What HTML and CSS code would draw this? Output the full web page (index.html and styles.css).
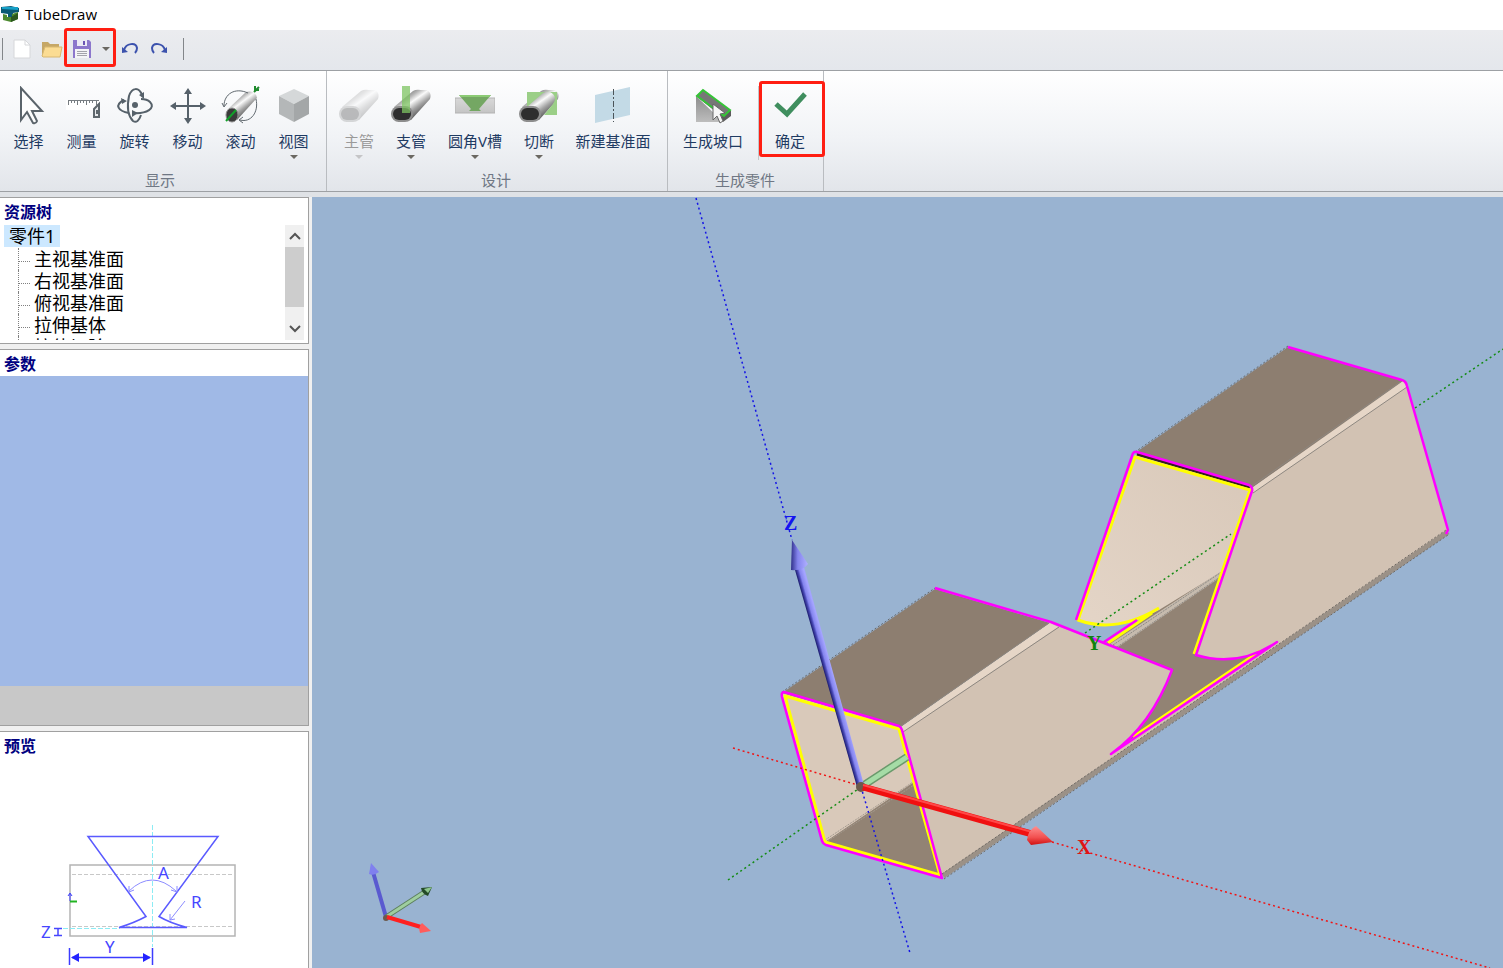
FILE: index.html
```html
<!doctype html>
<html lang="zh-CN">
<head>
	<meta charset="utf-8" />
	<title>TubeDraw</title>
	<link rel="stylesheet" href="styles.css">
</head>
<body>
	<!-- shared gradients and symbols -->
	<svg class="defs" width="0" height="0">
		<defs>
			<linearGradient id="metal" x1="0.1" y1="0" x2="0.9" y2="1">
				<stop offset="0.15" stop-color="#777" /><stop offset="0.3" stop-color="#b5b5b5" /><stop offset="0.42" stop-color="#fafafa" />
				<stop offset="0.58" stop-color="#a2a2a2" /><stop offset="0.75" stop-color="#5c5c5c" />
			</linearGradient>
			<linearGradient id="plate" x1="0" y1="0" x2="0" y2="1">
				<stop offset="0" stop-color="#d8d8d8" /><stop offset="1" stop-color="#c4c4c4" />
			</linearGradient>
			<linearGradient id="block" x1="0" y1="0" x2="0" y2="1">
				<stop offset="0" stop-color="#8c8c8c" /><stop offset="1" stop-color="#bdbdbd" />
			</linearGradient>
			<symbol id="tube" viewBox="0 0 40 40">
				<path d="M3 21 L22 5 Q25 3 30 4 L36 4 Q41 7 39 13 L20 34 L7 36Z" fill="url(#metal)" />
				<rect x="0" y="20" width="22" height="16" rx="8" fill="#8d8d8d" />
				<rect x="2" y="22" width="18" height="12" rx="6" fill="#2e2e2e" />
			</symbol>
		</defs>
	</svg>

	<header class="titlebar">
		<svg width="18" height="16" viewBox="0 0 18 16">
			<path d="M0 1 L10 0 L18 2 V6 L12 7 V11 H7 V8 L0 7Z" fill="#0b5a75" />
			<path d="M1 1 L17 1 V4 L1 3Z" fill="#16a0c8" />
			<path d="M2 8 L6 9 V11 H11 V8 L17 6 V13 L10 16 L2 14Z" fill="#4d8a30" />
			<path d="M10 11 L17 7 V13 L10 16Z" fill="#2b571d" />
		</svg>
		<h1>TubeDraw</h1>
	</header>

	<div class="quickbar">
		<span class="bar"></span>
		<button class="q-new" aria-label="新建">
			<svg width="18" height="20" viewBox="0 0 18 20"><path d="M1 1 H12 L17 6 V19 H1Z" fill="#fff" stroke="#d6d7da" /><path d="M12 1 V6 H17" fill="none" stroke="#d6d7da" /></svg>
		</button>
		<button class="q-open" aria-label="打开">
			<svg width="22" height="18" viewBox="0 0 22 18"><path d="M1 16 V2 H7 L9 4 H18 V8" fill="#c6a766" /><path d="M1 16 L4 7 H21 L19 17 H2Z" fill="#fbdc93" stroke="#d9b871" /></svg>
		</button>
		<span class="q-save marked">
			<button aria-label="保存">
				<svg width="20" height="20" viewBox="0 0 20 20"><path d="M1 1 H17 L19 3 V19 H1Z" fill="#8c77cc" /><path d="M5 1 H15 V7 H5Z" fill="#eceaf5" /><path d="M11 2 H13 V6 H11Z" fill="#6c55b5" /><path d="M3 10 H17 V19 H3Z" fill="#f4f4f6" /><path d="M5 12.500 H15 M5 14.500 H15 M5 16.500 H15" stroke="#a3a3ab" /></svg>
			</button>
			<button class="q-drop" aria-label="保存选项"><i class="caret"></i></button>
		</span>
		<button class="q-undo" aria-label="撤销">
			<svg width="18" height="14" viewBox="0 0 18 14"><path d="M3 8 C5 1 15 0 16 6 Q16 9 14 11" fill="none" stroke="#3c52ad" stroke-width="2" /><path d="M1 5 L1 11 L7 10Z" fill="#3c52ad" /></svg>
		</button>
		<button class="q-redo" aria-label="重做">
			<svg width="18" height="14" viewBox="0 0 18 14"><path d="M15 8 C13 1 3 0 2 6 Q2 9 4 11" fill="none" stroke="#3c52ad" stroke-width="2" /><path d="M17 5 L17 11 L11 10Z" fill="#3c52ad" /></svg>
		</button>
		<span class="bar"></span>
	</div>

	<nav class="ribbon">
		<section class="group g-view">
			<div class="tools">
				<button class="tool">
					<svg width="40" height="40" viewBox="0 0 40 40"><path d="M12 2 V34 L18 26 L24 37 Q27 38 28 35 L23 25 H33Z" fill="#fdfdfd" stroke="#5b646b" stroke-width="2" /></svg>
					<span>选择</span>
				</button>
				<button class="tool">
					<svg width="40" height="40" viewBox="0 0 40 40"><rect x="4" y="14" width="34" height="10" fill="#fff" /><path d="M6 14.500 H37 M6.500 14 V19 M9.500 14 V17 M12.500 14 V17 M15.500 14 V19 M18.500 14 V17 M21.500 14 V17 M24.500 14 V19 M27.500 14 V17 M30.500 14 V17 M34.500 14 V19" stroke="#777d82" fill="none" /><path d="M32 31 V23 L37 18 V31Z" fill="#e8eaec" stroke="#5f676d" stroke-width="2" /><path d="M35 24 V28" stroke="#5f676d" stroke-width="2" /></svg>
					<span>测量</span>
				</button>
				<button class="tool">
					<svg width="40" height="40" viewBox="0 0 40 40"><g fill="none" stroke="#56616a" stroke-width="2"><path d="M27 9 C24 1 17 1 14 10 C12 20 13 30 18 35 Q23 38 26 29" /><path d="M9 14 C-1 19 3 25 14 27 M18 27 C32 28 41 22 35 16 Q32 13 26 13" /></g><path d="M24 9 L29 13 L29 6Z M6 12 L12 15 L7 18Z M17 24 L23 27 L17 31Z" fill="#56616a" /><circle cx="20" cy="19" r="3" fill="#56616a" /></svg>
					<span>旋转</span>
				</button>
				<button class="tool">
					<svg width="40" height="40" viewBox="0 0 40 40"><path d="M20 5 V35 M5 20 H35" stroke="#56616a" stroke-width="2" /><path d="M20 2 L24 8 H16Z M20 38 L24 32 H16Z M2 20 L8 16 V24Z M38 20 L32 16 V24Z" fill="#56616a" /></svg>
					<span>移动</span>
				</button>
				<button class="tool">
					<svg width="40" height="40" viewBox="0 0 40 40"><path d="M6 24 L25 6 Q35 4 36 12 L16 34Z" fill="url(#metal)" /><ellipse cx="11" cy="29" rx="6" ry="7" fill="#3b3b3b" stroke="#8c8c8c" /><path d="M5 35 L15 24" stroke="#12a02a" stroke-width="2" /><path d="M33 6 L38 1 M34 0 V4 H38" stroke="#1f8a2d" stroke-width="2" fill="none" /><path d="M3 20 C3 8 14 1 27 7 M35 13 C38 26 30 37 19 34" fill="none" stroke="#60686e" /><path d="M1 17 L3 21 L6 17 M22 31 L18 34 L22 37" fill="none" stroke="#60686e" /></svg>
					<span>滚动</span>
				</button>
				<button class="tool">
					<svg width="40" height="40" viewBox="0 0 40 40"><path d="M20 3 L35 10 L20 18 L5 10Z" fill="#d5d8d9" /><path d="M5 10 L20 18 V36 L5 28Z" fill="#b4b7b8" /><path d="M35 10 L20 18 V36 L35 28Z" fill="#a4a7a8" /></svg>
					<span>视图</span><i class="caret"></i>
				</button>
			</div>
			<h2>显示</h2>
		</section>
		<section class="group g-design">
			<div class="tools">
				<button class="tool" disabled>
					<svg width="40" height="40"><use href="#tube" /></svg>
					<span>主管</span><i class="caret"></i>
				</button>
				<button class="tool">
					<svg width="40" height="40"><use href="#tube" /><path d="M11 0 H19 V27 H11Z" fill="#7dc462" opacity="0.75" /></svg>
					<span>支管</span><i class="caret"></i>
				</button>
				<button class="tool wide">
					<svg width="40" height="40" viewBox="0 0 40 40"><rect x="0" y="12" width="40" height="15" fill="url(#plate)" stroke="#b3b3b3" /><path d="M4 9 H36 L24 23 L26 25 H14 L16 23Z" fill="#74a763" /><path d="M4 9 H36 L34 11 H6Z" fill="#8ccb75" /></svg>
					<span>圆角V槽</span><i class="caret"></i>
				</button>
				<button class="tool">
					<svg width="40" height="40"><use href="#tube" /><path d="M8 6 H38 V29 H25 L34 18 Q38 12 34 8 Q30 4 24 7 L9 20 H8Z" fill="#9bcf87" /></svg>
					<span>切断</span><i class="caret"></i>
				</button>
				<button class="tool xwide">
					<svg width="40" height="40" viewBox="0 0 40 40"><path d="M2 9 L37 1 V29 L2 37Z" fill="#c3dae6" /><path d="M20.500 3 V36" stroke="#4b5459" stroke-dasharray="6 2 2 2" /></svg>
					<span>新建基准面</span>
				</button>
			</div>
			<h2>设计</h2>
		</section>
		<section class="group g-part">
			<div class="tools">
				<button class="tool wide">
					<svg width="40" height="40" viewBox="0 0 40 40"><path d="M3 10 L30 36 H3Z" fill="url(#block)" /><path d="M10 4 L38 25 V30 L30 36 L28 30 L3 10Z" fill="#5c5c5c" /><path d="M10 4 L37 24 L31 30 L4 10Z" fill="#777" stroke="#35c536" stroke-width="2" /><path d="M20 18 V34 L24 30 L27 37 L30 35 L27 28 L32 27Z" fill="#f6f6f6" stroke="#666" /></svg>
					<span>生成坡口</span>
				</button>
				<span class="split"></span>
				<button class="tool marked ok">
					<svg width="40" height="40" viewBox="0 0 40 40"><path d="M6 18 L17 28 L35 8" fill="none" stroke="#3f8e5e" stroke-width="5" /></svg>
					<span>确定</span>
				</button>
			</div>
			<h2>生成零件</h2>
		</section>
	</nav>

	<main class="workspace">
		<aside class="side">
			<section class="panel tree-panel">
				<h3>资源树</h3>
				<div class="tree-box">
					<ul class="tree">
						<li class="root"><span>零件1</span></li>
						<li>主视基准面</li>
						<li>右视基准面</li>
						<li>俯视基准面</li>
						<li>拉伸基体</li>
						<li>拉伸切除</li>
					</ul>
					<div class="scroll">
						<button aria-label="向上"><svg width="12" height="8" viewBox="0 0 12 8"><path d="M1 7 L6 2 L11 7" fill="none" stroke="#555" stroke-width="2" /></svg></button>
						<div class="thumb"></div>
						<button aria-label="向下"><svg width="12" height="8" viewBox="0 0 12 8"><path d="M1 1 L6 6 L11 1" fill="none" stroke="#555" stroke-width="2" /></svg></button>
					</div>
				</div>
			</section>
			<section class="panel param-panel">
				<h3>参数</h3>
				<div class="params"></div>
				<div class="params-foot"></div>
			</section>
			<section class="panel preview-panel">
				<h3>预览</h3>
				<svg class="preview" width="308" height="208" viewBox="0 760 308 208">
					<rect x="70" y="865" width="165" height="71" fill="none" stroke="#b4b4b4" stroke-width="1.500" />
					<path d="M72 874.500 H235 M72 926.500 H235" stroke="#c8c8c8" stroke-dasharray="4 2" />
					<path d="M152.500 825 V947 M63 928.500 H120" stroke="#8cecf4" stroke-dasharray="5 2" />
					<path d="M88 836.500 H218 L159 916.500 Q170 923 187 927.500 H119 Q134 923 146 916.500Z" fill="none" stroke="#5a5aff" stroke-width="1.500" />
					<path d="M129 891 Q152 869 176 891 M129 886 V892 L134 890 M171 890 L177 892 V886 M185 901 L170 920 M170 914 V920 L175 919" fill="none" stroke="#8c8cff" />
					<path d="M54 928.500 H62 M54 935.500 H62 M58 928 V936" stroke="#4646ff" stroke-width="1.500" />
					<path d="M69.500 948 V965 M152.500 948 V965 M72 957.500 H150" stroke="#3c3cff" stroke-width="1.500" />
					<path d="M71 957.500 L79 953 V962Z M151 957.500 L143 953 V962Z" fill="#2323ff" />
					<path d="M70 901 V894 M68 896 L70 893 L72 896" fill="none" stroke="#3c3cff" />
					<path d="M70 901.500 H77" stroke="#22b422" stroke-width="2" />
					<g class="dim"><text x="158" y="879">A</text><text x="191" y="908">R</text><text x="41" y="938">Z</text><text x="105" y="953">Y</text></g>
				</svg>
			</section>
		</aside>

		<svg class="scene" viewBox="312 197 1191 771" preserveAspectRatio="xMinYMin slice">
			<defs>
				<linearGradient id="zShaft" gradientUnits="userSpaceOnUse" x1="826" y1="678" x2="833.700" y2="675.800">
					<stop offset="0" stop-color="#1c1c70" /><stop offset="0.300" stop-color="#4c4cb8" /><stop offset="0.500" stop-color="#8484ee" /><stop offset="1" stop-color="#a4a4ff" />
				</linearGradient>
				<linearGradient id="zCone" x1="0" y1="0" x2="1" y2="0">
					<stop offset="0" stop-color="#30308a" /><stop offset="0.4" stop-color="#8484ee" /><stop offset="1" stop-color="#b0b0ff" />
				</linearGradient>
				<linearGradient id="xCone" x1="0" y1="0" x2="0" y2="1">
					<stop offset="0" stop-color="#ff9090" /><stop offset="0.6" stop-color="#f25050" /><stop offset="1" stop-color="#d01010" />
				</linearGradient>
				<linearGradient id="inner" x1="1" y1="0" x2="0" y2="1">
					<stop offset="0" stop-color="#d8c8b9" /><stop offset="1" stop-color="#e4d5c7" />
				</linearGradient>
			</defs>

			<!-- rear part of the tube -->
			<path d="M1106 643 L1159 608 L1221 570 L1290 600 L1282 648 L1111 755 L1172 671Z" fill="#928374" />
			<path d="M1135 455 L1251 488 L1221 572 L1159 610 Q1112 635 1077 620Z" fill="url(#inner)" />
			<path d="M1110 644 L1220 572 L1221 577 L1118 647Z" fill="#c6bbae" />
			<path d="M1113 645 L1220 573 M1117 647 L1220 577" stroke="#8f8b86" stroke-dasharray="2 1" />
			<path d="M1135 453 L1288 347 L1405 381 L1252 488Z" fill="#8d7e70" />
			<path d="M1252 488 L1406 382 L1448 532 L1272 651 L1277 642 Q1238 668 1196 655Z" fill="#d2c2b3" />
			<path d="M1252 488 L1403 381 L1407 387 L1253 493Z" fill="#e6d6c7" />
			<path d="M1252 486 L1403 380 M1253 493 L1407 387" stroke="#8d8780" />

			<!-- front part -->
			<path d="M782 693 L901 727 L942 878 L824 844Z" fill="#d9c9ba" />
			<path d="M825 842 L914 782 L941 877Z" fill="#928374" />
			<path d="M825 840 L913 782 M828 841 L914 785" stroke="#a49a8f" stroke-dasharray="2 1" />
			<path d="M782 693 L935 589 L1050 623 L901 727Z" fill="#8d7e70" />
			<path d="M901 727 L1050 623 L1172 670 C1160 702 1142 732 1111 754 L1277 642 L1282 645 L942 878Z" fill="#d2c2b3" />
			<path d="M901 727 L1050 623 L1058 627 L903 732Z" fill="#e6d6c7" />
			<path d="M901 726 L1049 623 M903 732 L1059 627" stroke="#8d8780" />
			<path d="M943 876 L1448 532" stroke="#9b9187" stroke-width="5" />
			<path d="M944 879 L1448 535 M942 874 L1446 530" stroke="#6f6a65" stroke-dasharray="2 2" />
			<path d="M782 692 L935 588 M1135 452 L1288 346" stroke="#66686a" stroke-dasharray="2 2" />

			<!-- edges -->
			<g fill="none" stroke-width="2" stroke-linejoin="round">
				<path d="M1137 454 L1250 487" stroke="#33221c" stroke-width="3" />
				<path d="M785 696 L899 729 L940 875 L825 842Z M1194 654 L1250 490 L1135 457 L1078 620 Q1116 634 1159 608 M1108 643 L1152 613 M1133 737 L1260 651" stroke="#ffff00" stroke-width="3" />
				<path d="M784 692 L899 726 Q901 727 902 730 L942 878 L826 845 Q823 844 822 841 L782 697 Q781 692 784 692Z" stroke="#ff00ff" stroke-width="2.500" />
				<path d="M935 588 L1051 622 L1172 670 C1160 702 1142 732 1111 754 L1277 642 Q1238 668 1196 655 L1252 491 Q1253 487 1249 485 L1137 452 Q1133 451 1132 456 L1076 620 M1288 347 L1402 380 Q1406 381 1407 386 L1448 530 L1446 534 M1104 642 L1137 620" stroke="#ff00ff" stroke-width="2.500" />
			</g>

			<!-- axes -->
			<g fill="none" stroke-dasharray="2 3" stroke-width="1.500">
				<path d="M696 198 L792 540 M861 787 L910 953" stroke="#1414e6" />
				<path d="M733 748 L861 786 M1052 842 L1490 968" stroke="#f01414" />
				<path d="M728 880 L861 787 M1085 633 L1231 534 M1415 408 L1503 349" stroke="#148c14" />
			</g>
			<path d="M864 785 L907 757" stroke="#6a9a6c" stroke-width="8" />
			<path d="M864 785 L907 757" stroke="#a5dca6" stroke-width="5" />
			<path d="M795 570 L804 567 L864 785 L857 787Z" fill="url(#zShaft)" />
			<path d="M792 540 L808 564 Q803 571 791 570Z" fill="url(#zCone)" />
			<circle cx="861" cy="787" r="5" fill="#6b5a4c" />
			<path d="M863 787 L1032 834" stroke="#f01010" stroke-width="7" />
			<path d="M863 785 L1032 832" stroke="#ff4848" stroke-width="2" />
			<path d="M1053 842 L1036 826 Q1028 830 1027 840 L1031 845Z" fill="url(#xCone)" />
			<g class="axis">
				<text x="784" y="530" fill="#1414f0">Z</text>
				<text x="1077" y="854" fill="#e01414">X</text>
				<text x="1087" y="650" fill="#0f820f">Y</text>
			</g>

			<!-- orientation marker -->
			<path d="M386 917 L373 872" stroke="#5a5ad0" stroke-width="4" />
			<path d="M371 863 L379 872 Q374 876 369 874Z" fill="#8080ee" />
			<path d="M386 917 L426 891" stroke="#5d805e" stroke-width="5" />
			<path d="M386 917 L426 891" stroke="#9fce9f" stroke-width="3" />
			<path d="M432 887 L421 888 Q422 894 428 896Z" fill="#234a26" />
			<path d="M432 887 L424 889 L428 893Z" fill="#8cc48c" />
			<circle cx="386" cy="918" r="3" fill="#6b5a4c" />
			<path d="M387 917 L421 927" stroke="#ff2020" stroke-width="4" />
			<path d="M431 931 L422 923 Q418 927 420 933Z" fill="#ff5c5c" />
		</svg>
	</main>
</body>
</html>
```
FILE: styles.css
```css
* { box-sizing: border-box; }
body {
	margin: 0;
	height: 100vh;
	display: flex;
	flex-direction: column;
	overflow: hidden;
	background: #f0f0f0;
	font-family: "Noto Sans", "Noto Sans CJK SC", sans-serif;
}
h1, h2, h3, ul { margin: 0; padding: 0; font-weight: normal; }
button { border: 0; padding: 0; margin: 0; background: none; font: inherit; color: inherit; }
svg { display: block; flex: none; }
.defs { position: absolute; }

.titlebar { display: flex; align-items: center; gap: 6px; height: 30px; padding: 0 0 3px 1px; background: #fff; }
.titlebar h1 { font: 15px/20px "Open Sans", sans-serif; color: #000; }

.quickbar {
	display: flex;
	align-items: center;
	height: 41px;
	padding: 0 0 3px 2px;
	background: linear-gradient(#ebecef, #e4e7ec);
	border-bottom: 1px solid #9da0a4;
}
.bar { width: 1px; height: 22px; background: #83868a; }
.q-new { margin-left: 10px; }
.q-open { margin-left: 10px; }
.q-save { display: flex; align-items: center; width: 52px; height: 36px; margin-left: 1px; padding-left: 8px; }
.q-drop { margin-left: 10px; }
.q-undo { margin-left: 5px; }
.q-redo { margin: 0 15px 0 11px; }

.caret { display: block; width: 0; border: 4px solid transparent; border-top-color: #6b6862; border-bottom: 0; }

/* red call-out round a control */
.marked { position: relative; }
.marked::after { content: ""; position: absolute; inset: -3px 0 0; border: 3px solid #ff1e12; border-radius: 3px; pointer-events: none; }

.ribbon {
	display: flex;
	height: 121px;
	background: linear-gradient(#fff, #f1f3f6 55%, #e2e5ea);
	border-bottom: 1px solid #9da0a4;
}
.group { display: flex; flex-direction: column; justify-content: space-between; padding-top: 15px; border-right: 1px solid #b9bcc0; }
.g-view { width: 327px; padding-left: 2px; }
.g-design { width: 341px; padding-left: 6px; }
.g-part { width: 156px; padding-left: 7px; }
.group h2 { padding: 0 8px 0 0; font-size: 15px; line-height: 22px; text-align: center; color: #6f7784; }
.tools { display: flex; align-items: flex-start; }
.tool { display: flex; flex-direction: column; align-items: center; width: 53px; height: 76px; font-size: 15px; line-height: 22px; color: #1f3b63; white-space: nowrap; }
.tool span { margin-top: 4px; }
.tool .caret { margin-top: 3px; }
.g-design .tool, .g-part .tool { width: 52px; }
.g-design .wide, .g-part .wide { width: 76px; }
.g-design .xwide { width: 96px; }
.tool:disabled { color: #9a9a9a; }
.tool:disabled svg, .tool:disabled .caret { opacity: 0.3; }
.split { width: 1px; height: 74px; margin: 0 5px 0 7px; background: #c3c6ca; }
.ok::after { inset: -5px -9px 5px -5px; }

.workspace { flex: 1; display: flex; gap: 3px; min-height: 0; padding-top: 5px; background: linear-gradient(#dfe2e6 5px, #f0f0f0 5px); }
.side { display: grid; grid-template-rows: 147px 1fr 237px; gap: 5px; width: 309px; flex: none; }
.panel { display: flex; flex-direction: column; min-height: 0; background: #fff; border: 1px solid #a0a0a0; border-left: 0; }
.panel h3 { height: 26px; padding-left: 4px; font-size: 16px; line-height: 28px; font-weight: bold; color: #000080; }
.preview-panel { border-bottom: 0; }

.tree-box { display: flex; justify-content: space-between; height: 115px; margin: 1px 4px 0; overflow: hidden; }
.tree { list-style: none; font-size: 18px; line-height: 22px; color: #000; }
.tree li { position: relative; height: 22px; padding-left: 30px; }
.tree .root { padding: 0; }
.root span { display: inline-block; height: 22px; padding: 0 5px; background: #cce8ff; }
.tree li:not(.root)::before { content: ""; position: absolute; left: 14px; top: 0; width: 11px; height: 13px; border-left: 1px dotted #808080; border-bottom: 1px dotted #808080; }
.tree li:not(.root)::after { content: ""; position: absolute; left: 14px; top: 13px; bottom: 0; border-left: 1px dotted #808080; }
.tree .root + li { margin-top: 1px; }
.scroll { display: flex; flex-direction: column; width: 19px; background: #f0f0f0; }
.scroll button { display: flex; align-items: center; justify-content: center; height: 22px; }
.scroll button:last-child { margin-top: auto; }
.thumb { height: 60px; background: #cdcdcd; }

.params { flex: 1; background: #a0b9e6; }
.params-foot { height: 39px; background: #c8c8c8; }
.preview { margin-top: 2px; }
.dim { font: 17px "Noto Sans", sans-serif; fill: #4646ff; }

.scene { flex: 1; min-width: 0; height: 100%; background: #99b3d1; }
.axis { font: bold 20px "Liberation Serif", serif; }
```
